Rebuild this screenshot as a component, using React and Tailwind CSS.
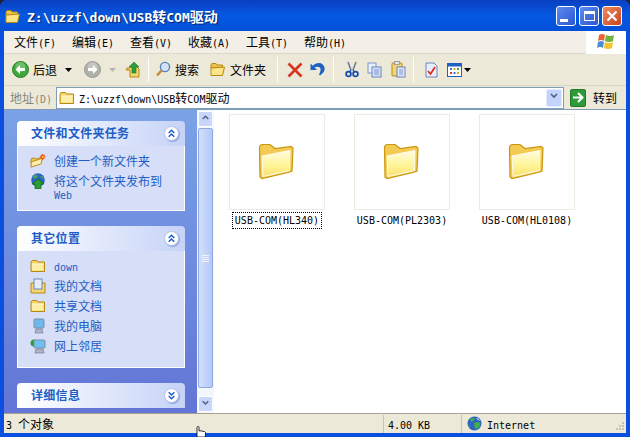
import React from "react";

function T({ children, className = "", latin = "text-[10px]", wrap = false }) {
  const parts = String(children).split(/([\x00-\x7f]+)/).filter(Boolean);
  return (
    <span className={(wrap ? "" : "whitespace-pre ") + className}>
      {parts.map((p, i) =>
        /^[\x00-\x7f]/.test(p) ? (
          <span key={i} className={"font-['DejaVu_Sans_Mono',monospace] " + latin}>{p}</span>
        ) : (
          <span key={i}>{p}</span>
        )
      )}
    </span>
  );
}

const FolderSmall = ({ className = "" }) => (
  <svg width="16" height="14" viewBox="0 0 16 14" className={className}>
    <path d="M1 3.5 L2 1.5 H6.5 L7.5 3 H14.5 V12.5 H1 Z" fill="#f7d768" stroke="#b58a10" strokeWidth="1" />
    <path d="M2 5 H13.5 V11.5 H2 Z" fill="#fdeda5" />
    <path d="M2 5 H14 " stroke="#fff8d5" />
  </svg>
);
const FolderOpen = ({ className = "" }) => (
  <svg width="16" height="15" viewBox="0 0 16 15" className={className}>
    <path d="M1 3 L2 1.5 H6 L7 3 H12.5 V6 H1 Z" fill="#eec24f" stroke="#b58a10" />
    <path d="M1 13.5 L1 6 L14.5 5 L12.5 13.5 Z" fill="#fbe48a" stroke="#b58a10" />
  </svg>
);
const FolderNew = () => (
  <svg width="17" height="16" viewBox="0 0 17 16">
    <path d="M1 7 L2 5 H6 L7 6 L12 4 V10 H1 Z" fill="#eec24f" stroke="#b58a10" />
    <path d="M1 14.5 L1.5 9 L13 5 L12 11 Z" fill="#fdeeb0" stroke="#b58a10" />
    <path d="M13.5 0.5 V7 M10.5 3.5 H16.5 M11.5 1.5 L15.5 5.5 M15.5 1.5 L11.5 5.5" stroke="#ee4a14" strokeWidth="1.2" />
    <circle cx="13.5" cy="3.5" r="1.2" fill="#ffd23a" />
  </svg>
);
const FolderLarge = () => (
  <svg width="38" height="38" viewBox="0 0 38 38">
    <defs>
      <linearGradient id="lf" x1="0" y1="0" x2="0" y2="1">
        <stop offset="0" stopColor="#fffbe0" />
        <stop offset="0.55" stopColor="#fff59a" />
        <stop offset="1" stopColor="#fddf70" />
      </linearGradient>
    </defs>
    <path d="M1.5 5 Q1.5 1.5 5 1.5 H12 L17 5.5 L33 3.5 L35 5 L34 28 L30 29.5 L4 35.5 L2 34 Z" fill="#f3cb52" stroke="#c9970f" strokeWidth="1.2" />
    <path d="M4 13 L32 7.5 L31.5 27.5 L5 33.5 Z" fill="url(#lf)" stroke="#fffdf0" strokeWidth="1" />
  </svg>
);
const Globe = ({ s = 15 }) => (
  <svg width={s} height={s} viewBox="0 0 15 15">
    <circle cx="7.5" cy="7.5" r="7" fill="#2d62c8" />
    <path d="M3 3 Q6 1 8 3 Q6 6 4 6 Z M7 7 Q11 5 13.5 7 Q13 12 9 13.5 Q7 11 7 7 Z M1 8 Q3 9 4 12 Q2 11 1 8Z" fill="#3fae4c" />
    <path d="M9 2 Q12 2 13 5 Q10 4 9 2Z" fill="#a8d4f5" />
  </svg>
);
const GlobeUp = () => (
  <svg width="16" height="16" viewBox="0 0 16 16">
    <circle cx="8" cy="7" r="6.8" fill="#2d62c8" />
    <path d="M3 3 Q6 1 8 3 Q6 6 4 6 Z M10 3 Q13 3 14 6 Q11 6 10 3 Z" fill="#3fae4c" />
    <path d="M8 6 L14 11 H11 V15.5 H5 V11 H2 Z" fill="#2aa030" stroke="#136a1a" strokeWidth="0.8" />
  </svg>
);
const Circle = ({ fill, dir = "l", edge }) => (
  <svg width="17" height="17" viewBox="0 0 17 17">
    <circle cx="8.5" cy="8.5" r="8" fill={fill} stroke={edge} />
    <circle cx="8.5" cy="6" r="5" fill="#fff" opacity="0.25" />
    <path d={dir === "l" ? "M3.5 8.5 L8 4 V7 H13 V10 H8 V13 Z" : "M13.5 8.5 L9 4 V7 H4 V10 H9 V13 Z"} fill="#fff" />
  </svg>
);
const Chev = ({ up, color = "#215dc6", double }) => {
  const d = up ? "M4 6 L7 3 L10 6" : "M4 3 L7 6 L10 3";
  const d2 = up ? "M4 10 L7 7 L10 10" : "M4 7 L7 10 L10 7";
  return (
    <svg width="14" height="13" viewBox="0 0 14 13">
      <path d={d} fill="none" stroke={color} strokeWidth="1.6" />
      {double && <path d={d2} fill="none" stroke={color} strokeWidth="1.6" />}
    </svg>
  );
};
const Sep = ({ className = "" }) => <div className={"w-px h-[25px] bg-[#c8c5b2] border-r border-white " + className} />;
const Arrow = ({ color = "#000", className = "" }) => (
  <svg width="7" height="4" viewBox="0 0 7 4" className={className}><path d="M0 0 H7 L3.5 4 Z" fill={color} /></svg>
);

const Pane = ({ title, up = true, children }) => (
  <div className="w-[168px] shrink-0">
    <div className="h-[25px] rounded-t-[4px] bg-gradient-to-r from-white to-[#c6d3f7] flex items-center justify-between pl-[14px] pr-[6px]">
      <span className="text-[12px] font-bold text-[#215dc6] tracking-[0.3px] pb-[2px]">{title}</span>
      <div className="w-[15px] h-[15px] rounded-full bg-white border border-[#b4c3ea] flex items-center justify-center shadow-[1px_1px_1px_#8ea2dd]">
        <Chev up={up} double />
      </div>
    </div>
    {children}
  </div>
);
const Task = ({ icon, children }) => (
  <div className="flex items-start gap-[8px] min-h-[20px]">
    <div className="w-[16px] h-[16px] shrink-0 flex items-center justify-center">{icon}</div>
    <T wrap className="text-[12px] leading-[13px] text-[#215dc6] pt-px">{children}</T>
  </div>
);
const Tile = ({ label, focus }) => (
  <div className="w-[96px] flex flex-col items-center">
    <div className="w-[96px] h-[96px] border border-[#eeece2] flex items-center justify-center bg-white">
      <FolderLarge />
    </div>
    <div className={"mt-[2px] h-[17px] px-[2px] pb-[3px] flex items-center border border-dotted " + (focus ? "border-black" : "border-transparent")}>
      <T className="text-[12px] text-black">{label}</T>
    </div>
  </div>
);
const MenuItem = ({ children, w = 58 }) => (
  <div style={{ width: w }}><T className="text-[12px] text-black">{children}</T></div>
);
const Btn = ({ children, cls }) => (
  <div className={"w-[20px] h-[20px] rounded-[3px] border border-white flex items-center justify-center " + cls}>{children}</div>
);

export default function App() {
  return (
    <div className="w-[630px] h-[437px] bg-[#202030] overflow-hidden font-['Noto_Sans_CJK_SC',sans-serif] relative">
      <div className="w-[630px] h-[437px] rounded-t-[7px] bg-[#0a4fe0] flex flex-col px-[4px] pb-[4px] overflow-hidden">
        {/* title bar */}
        <div className="h-[31px] -mx-[4px] shrink-0 bg-gradient-to-b from-[#0a3fc0] via-[#0558e2] to-[#0350d8] flex items-center pl-[5px] pr-[8px]">
          <FolderOpen className="mt-px" />
          <T latin="text-[13px]" className="ml-[6px] mt-[2px] text-white font-bold text-[14px] [text-shadow:1px_1px_1px_#0a246a]">{"Z:\\uzzf\\down\\USB转COM驱动"}</T>
          <div className="ml-auto flex gap-[3px]">
            <Btn cls="bg-gradient-to-br from-[#5c8cf0] to-[#2a55d0]"><div className="w-[8px] h-[3px] bg-white mt-[9px] -ml-[4px]" /></Btn>
            <Btn cls="bg-gradient-to-br from-[#5c8cf0] to-[#2a55d0]"><div className="w-[11px] h-[10px] border border-white border-t-[3px]" /></Btn>
            <Btn cls="bg-gradient-to-br from-[#ee8a60] to-[#c8401c]">
              <svg width="12" height="12" viewBox="0 0 12 12"><path d="M1.5 1.5 L10.5 10.5 M10.5 1.5 L1.5 10.5" stroke="#fff" strokeWidth="2.2" /></svg>
            </Btn>
          </div>
        </div>
        {/* menu */}
        <div className="h-[23px] shrink-0 bg-[#f3efe6] border-b border-[#dcd9c8] flex items-center pl-[10px]">
          <div className="flex pb-[5px]">
            <MenuItem>文件(F)</MenuItem>
            <MenuItem>编辑(E)</MenuItem>
            <MenuItem>查看(V)</MenuItem>
            <MenuItem>收藏(A)</MenuItem>
            <MenuItem>工具(T)</MenuItem>
            <MenuItem>帮助(H)</MenuItem>
          </div>
          <div className="ml-auto w-[40px] h-[23px] bg-white flex items-center justify-center">
            <svg width="20" height="18" viewBox="0 0 20 18">
              <path d="M3 2 Q6 0 9 2 L8 8 Q5 6 2 8 Z" fill="#e8623a" />
              <path d="M10 2 Q14 4 18 2 L17 8 Q13 10 9 8 Z" fill="#6fb43a" />
              <path d="M2 9 Q5 7 8 9 L7 15 Q4 13 1 15 Z" fill="#4a8fd8" />
              <path d="M9 9 Q13 11 17 9 L16 15 Q12 17 8 15 Z" fill="#f4c430" />
            </svg>
          </div>
        </div>
        {/* toolbar */}
        <div className="h-[32px] shrink-0 bg-[#ece9d8] flex items-center pl-[8px] border-b border-[#d8d5c4]">
          <Circle fill="#3da93a" dir="l" edge="#2a7f2a" />
          <T className="ml-[4px] text-[12px] text-black">后退</T>
          <Arrow className="ml-[8px]" />
          <div className="ml-[12px]"><Circle fill="#b0b0aa" dir="r" edge="#9a9a94" /></div>
          <Arrow color="#b5b5b0" className="ml-[8px]" />
          <svg width="16" height="18" viewBox="0 0 16 18" className="ml-[9px]">
            <path d="M1 9 H5 V16 H14 V8 L12 6 H6 L5 7 H2 Z" fill="#f3d572" stroke="#b58a10" />
            <path d="M9 1 L14 6 H11 V12 H7 V6 H4 Z" fill="#2f9e3a" stroke="#1a7a25" strokeWidth="0.6" />
          </svg>
          <Sep className="ml-[7px]" />
          <svg width="16" height="17" viewBox="0 0 16 17" className="ml-[6px]">
            <circle cx="10" cy="6" r="4.6" fill="#cfe4fb" stroke="#5b83b8" strokeWidth="1.4" />
            <path d="M6.5 9.5 L2 14.5" stroke="#c88a3a" strokeWidth="2.6" />
          </svg>
          <T className="ml-[4px] text-[12px] text-black">搜索</T>
          <FolderOpen className="ml-[11px]" />
          <T className="ml-[4px] text-[12px] text-black">文件夹</T>
          <Sep className="ml-[11px]" />
          <svg width="16" height="16" viewBox="0 0 16 16" className="ml-[9px]"><path d="M1.5 1.5 L14.5 14.5 M14.5 1.5 L1.5 14.5" stroke="#d9341f" strokeWidth="2.6" /></svg>
          <svg width="17" height="15" viewBox="0 0 17 15" className="ml-[6px]">
            <path d="M1.5 1.5 V8 H8 L5.6 5.6 Q8 4 10.5 5.2 Q13 7 10 12.5 L11 13.5 Q16.5 9.5 15.5 5.5 Q13.5 -0.5 7 1.5 Q5 2.2 3.8 3.8 Z" fill="#1d62c0" />
          </svg>
          <Sep className="ml-[7px]" />
          <svg width="14" height="17" viewBox="0 0 14 17" className="ml-[11px]">
            <path d="M3 1 L6 9 M11 1 L8 9" stroke="#6c7c9c" strokeWidth="1.6" />
            <circle cx="3.5" cy="13" r="2.4" fill="none" stroke="#1f4fae" strokeWidth="1.8" />
            <circle cx="10.5" cy="13" r="2.4" fill="none" stroke="#1f4fae" strokeWidth="1.8" />
            <path d="M6 9 L4.5 11 M8 9 L9.5 11" stroke="#1f4fae" strokeWidth="1.4" />
          </svg>
          <svg width="15" height="16" viewBox="0 0 15 16" className="ml-[8px]">
            <rect x="1" y="1" width="8" height="10" fill="#e8eefb" stroke="#7f95c8" />
            <rect x="5" y="5" width="9" height="10" fill="#d5e0f8" stroke="#6d85c0" />
            <path d="M7 8 H12 M7 10 H12 M7 12 H12" stroke="#7f95c8" />
          </svg>
          <svg width="15" height="17" viewBox="0 0 15 17" className="ml-[9px]">
            <rect x="1" y="2" width="10" height="13" rx="1" fill="#f3d572" stroke="#b58a10" />
            <rect x="3.5" y="0.5" width="5" height="3" fill="#dfe3ea" stroke="#888" strokeWidth="0.7" />
            <rect x="6" y="6" width="8" height="10" fill="#dfe7fa" stroke="#6d85c0" />
            <path d="M8 9 H12 M8 11 H12 M8 13 H12" stroke="#7f95c8" />
          </svg>
          <Sep className="ml-[7px]" />
          <svg width="13" height="16" viewBox="0 0 13 16" className="ml-[11px]">
            <path d="M1 1 H9 L12 4 V15 H1 Z" fill="#e8eefb" stroke="#6d85c0" />
            <path d="M3 9 L5.5 12 L10 5" fill="none" stroke="#e0301e" strokeWidth="1.8" />
          </svg>
          <svg width="15" height="14" viewBox="0 0 15 14" className="ml-[9px]">
            <rect x="0.5" y="0.5" width="14" height="13" fill="#fff" stroke="#2160c4" />
            <rect x="0.5" y="0.5" width="14" height="3" fill="#2160c4" />
            <rect x="3" y="5" width="2" height="2" fill="#3b72d0" /><rect x="6.5" y="5" width="2" height="2" fill="#e0a030" /><rect x="10" y="5" width="2" height="2" fill="#3aa040" />
            <rect x="3" y="9" width="2" height="2" fill="#d04030" /><rect x="6.5" y="9" width="2" height="2" fill="#3b72d0" /><rect x="10" y="9" width="2" height="2" fill="#e0a030" />
          </svg>
          <Arrow className="ml-[2px]" />
        </div>
        {/* address */}
        <div className="h-[24px] shrink-0 bg-[#ece9d8] flex items-center pl-[6px] border-b border-[#7f9db9]">
          <T className="text-[12px] text-[#8a8878] w-[46px]">地址(D)</T>
          <div className="w-[508px] h-[22px] bg-white border border-[#7f9db9] flex items-center pl-[2px] pr-px">
            <FolderSmall />
            <T className="ml-[4px] text-[12px] text-black">{"Z:\\uzzf\\down\\USB转COM驱动"}</T>
            <div className="ml-auto w-[16px] h-[18px] bg-[#c3d3fb] border border-[#e3ebfd] rounded-[2px] flex items-center justify-center">
              <Chev color="#4d6185" />
            </div>
          </div>
          <div className="ml-[6px] w-[16px] h-[18px] rounded-[2px] bg-[#2f9a3a] border border-[#1f7a2a] flex items-center justify-center">
            <svg width="12" height="11" viewBox="0 0 12 11"><path d="M1 5.5 H10 M6 1 L10.5 5.5 L6 10" fill="none" stroke="#fff" strokeWidth="2" /></svg>
          </div>
          <T className="ml-[7px] text-[12px] text-black">转到</T>
        </div>
        {/* main */}
        <div className="flex-1 min-h-0 flex bg-white">
          <div className="w-[193px] shrink-0 bg-gradient-to-b from-[#7ba2e7] to-[#6375d6] pt-[11px] pl-[13px] flex flex-col overflow-hidden">
            <Pane title="文件和文件夹任务">
              <div className="h-[65px] bg-[#d6dff7] border-x border-b border-white pl-[12px] pt-[7px] pr-[20px] flex flex-col">
                <Task icon={<FolderNew />}>创建一个新文件夹</Task>
                <Task icon={<GlobeUp />}>将这个文件夹发布到Web</Task>
              </div>
            </Pane>
            <div className="h-[15px] shrink-0" />
            <Pane title="其它位置">
              <div className="h-[117px] bg-[#d6dff7] border-x border-b border-white pl-[12px] pt-[7px] flex flex-col">
                <Task icon={<FolderSmall />}>down</Task>
                <Task icon={
                  <svg width="16" height="16" viewBox="0 0 16 16"><path d="M1 5 H15 V15 H1 Z" fill="#f3d572" stroke="#b58a10" /><rect x="4" y="1" width="8" height="10" fill="#e6edf9" stroke="#6d85c0" /></svg>
                }>我的文档</Task>
                <Task icon={<FolderSmall />}>共享文档</Task>
                <Task icon={
                  <svg width="13" height="16" viewBox="0 0 13 16"><rect x="2" y="1" width="10" height="9" rx="1" fill="#6fb8ee" stroke="#7c8ea8" /><path d="M4 11 H10 L11 15 H3 Z" fill="#b0b4c8" stroke="#6c7088" strokeWidth="0.6" /></svg>
                }>我的电脑</Task>
                <Task icon={
                  <svg width="16" height="16" viewBox="0 0 16 16"><circle cx="4" cy="5" r="3.5" fill="#2f9a3a" /><rect x="4" y="2" width="11" height="8" rx="1" fill="#6fc0f0" stroke="#7c8ea8" /><path d="M6 11 H13 L14 15 H5 Z" fill="#b0b4c8" stroke="#6c7088" strokeWidth="0.6" /></svg>
                }>网上邻居</Task>
              </div>
            </Pane>
            <div className="h-[15px] shrink-0" />
            <Pane title="详细信息" up={false} />
          </div>
          {/* scrollbar */}
          <div className="w-[17px] shrink-0 bg-[#f3f6fd] flex flex-col items-center py-px">
            <div className="w-[15px] h-[16px] rounded-[2px] bg-[#c8d6fb] border border-white flex items-center justify-center"><Chev up color="#4d6185" /></div>
            <div className="mt-[1px] w-[15px] h-[260px] rounded-[2px] bg-gradient-to-r from-[#d3dffc] to-[#b4c8f8] border border-[#8ea8e0] flex items-center justify-center">
              <svg width="7" height="7" viewBox="0 0 7 7"><path d="M0 0.5 H7 M0 2.5 H7 M0 4.5 H7 M0 6.5 H7" stroke="#eef3fe" /></svg>
            </div>
            <div className="mt-auto w-[15px] h-[16px] rounded-[2px] bg-[#c8d6fb] border border-white flex items-center justify-center"><Chev color="#4d6185" /></div>
          </div>
          {/* files */}
          <div className="flex-1 pl-[15px] pt-[4px] flex items-start gap-[29px]">
            <Tile label="USB-COM(HL340)" focus />
            <Tile label="USB-COM(PL2303)" />
            <Tile label="USB-COM(HL0108)" />
          </div>
        </div>
        {/* status */}
        <div className="h-[20px] shrink-0 bg-[#ece9d8] border-t border-[#a5a294] flex items-center">
          <T className="pl-[2px] w-[379px] text-[12px] text-black">3 个对象</T>
          <div className="w-[78px] h-[18px] border-l border-[#c8c5b2] flex items-center pl-[4px]"><T className="text-[12px] text-black">4.00 KB</T></div>
          <div className="h-[18px] border-l border-[#c8c5b2] flex items-center pl-[5px]">
            <Globe />
            <T className="ml-[5px] text-[12px] text-black">Internet</T>
          </div>
          <svg width="11" height="11" viewBox="0 0 11 11" className="ml-auto mt-[6px] mr-px">
            <path d="M8 1h2v2H8z M5 4h2v2H5z M8 4h2v2H8z M2 7h2v2H2z M5 7h2v2H5z M8 7h2v2H8z" fill="#c5c2b0" />
          </svg>
        </div>
      </div>
      {/* cursor */}
      <svg width="13" height="11" viewBox="0 0 13 11" className="absolute left-[194px] top-[426px]">
        <path d="M3 11 V1.5 Q3 0.5 4 0.5 Q5 0.5 5 1.5 V5 Q6 4.5 7 5 Q8 4.5 9 5.5 Q10.5 5 11.5 6.5 V11 Z" fill="#fff" stroke="#000" strokeWidth="0.8" />
      </svg>
    </div>
  );
}
